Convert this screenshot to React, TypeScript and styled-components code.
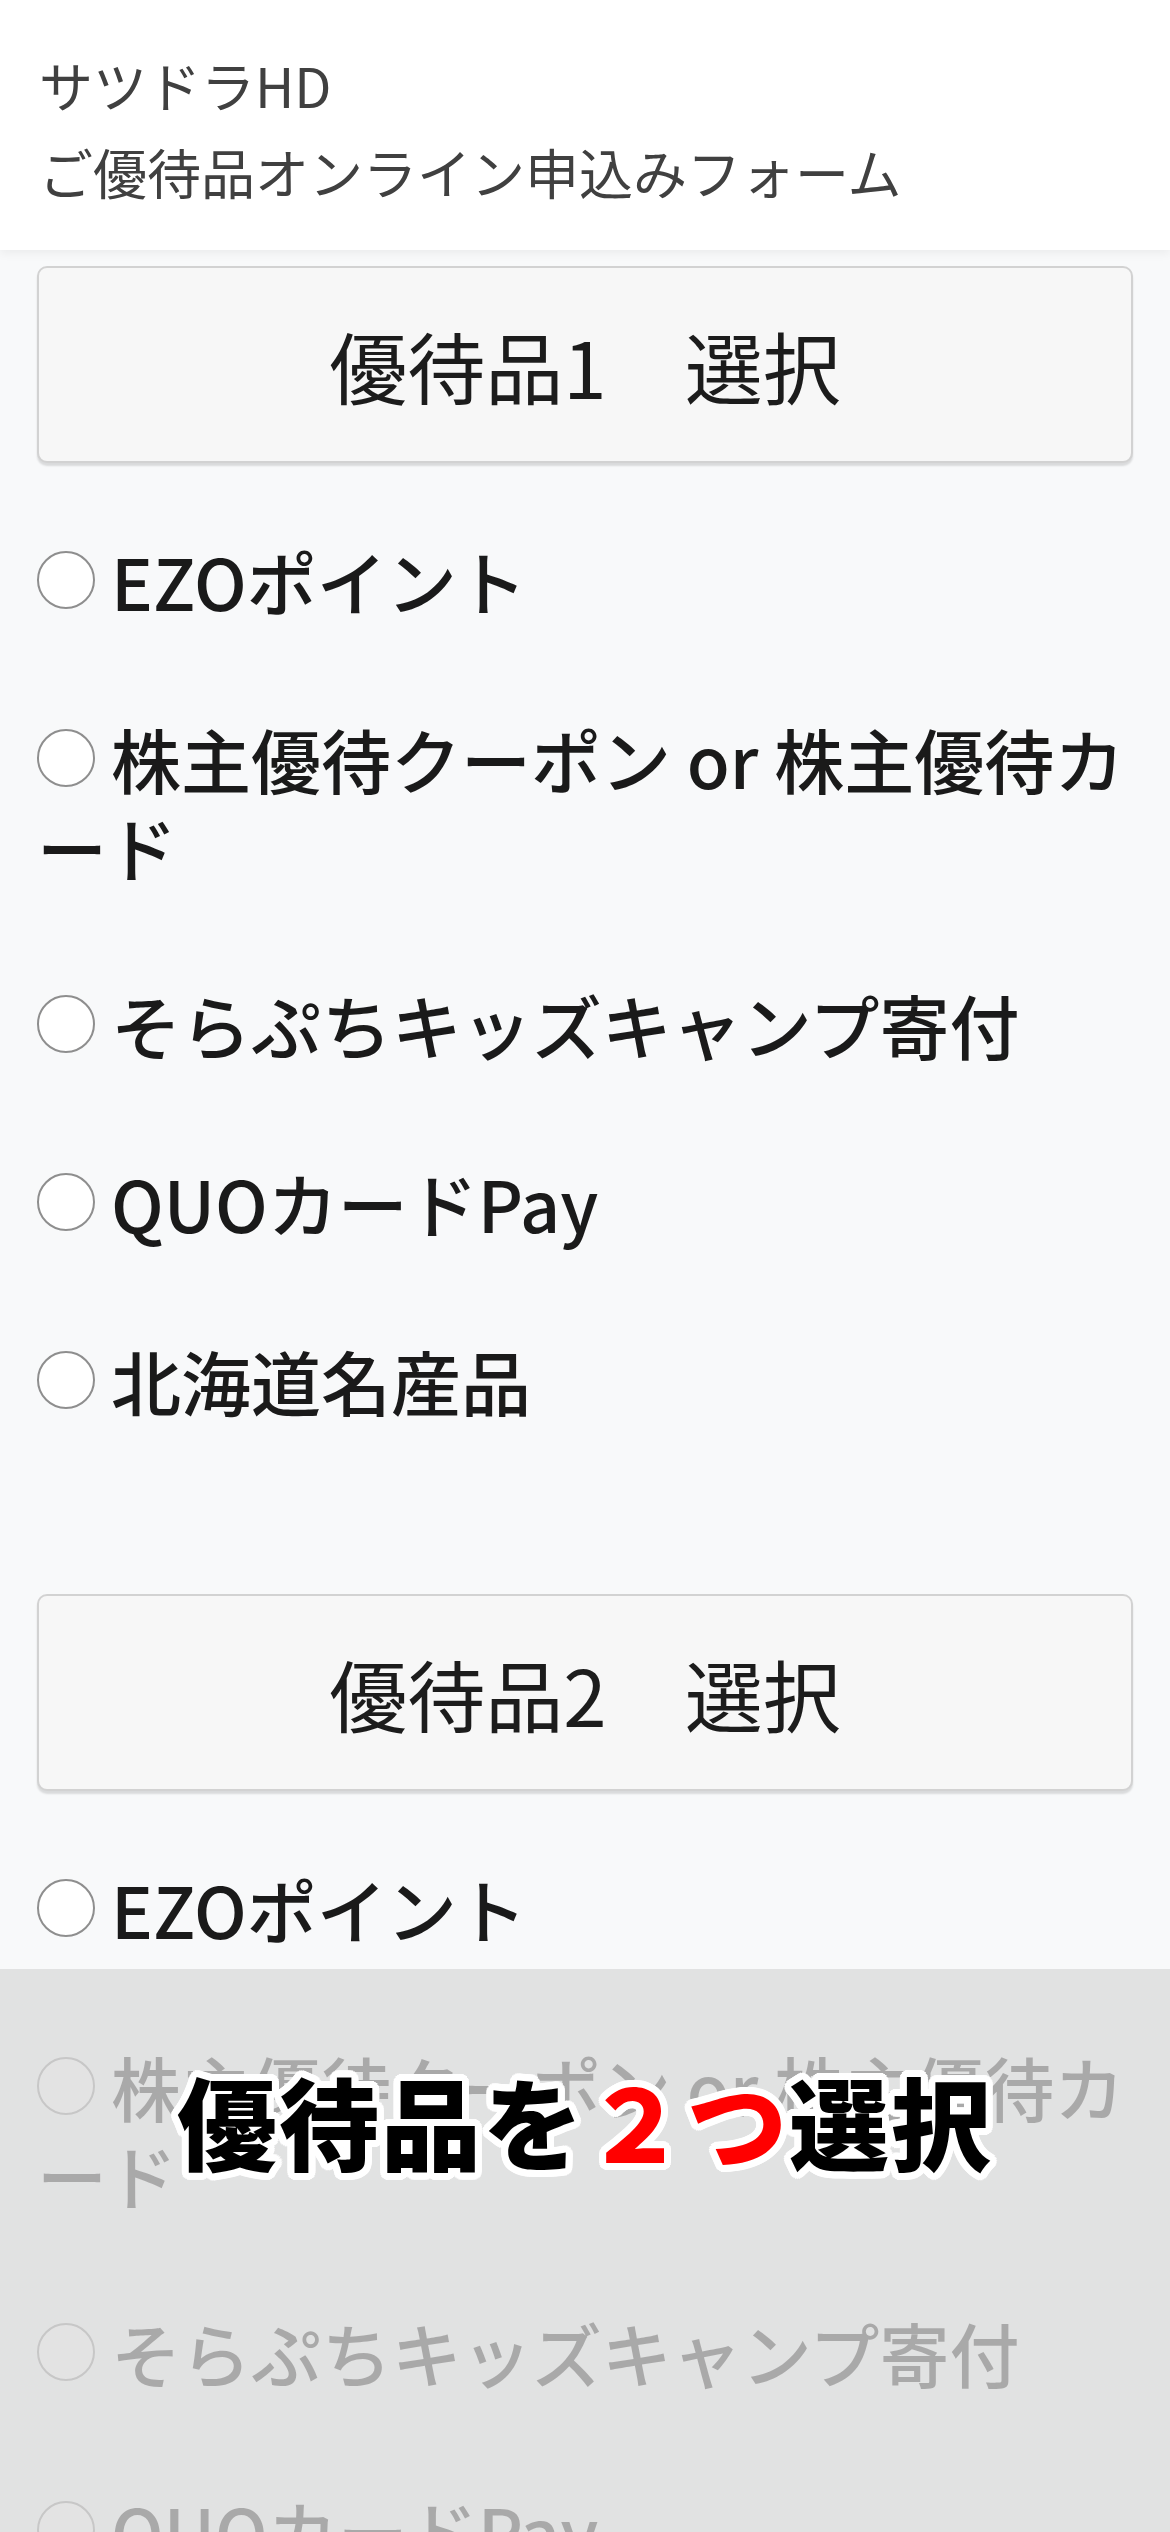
import React from "react";
import styled, { createGlobalStyle } from "styled-components";

const GlobalStyle = createGlobalStyle`
  html, body { margin: 0; padding: 0; }
  body {
    background: #f8f9fa;
    font-family: "Noto Sans CJK JP", "Noto Sans", sans-serif;
    color: #212529;
  }
`;

const Header = styled.header`
  position: relative;
  z-index: 1;
  box-sizing: border-box;
  height: 250px;
  padding: 41px 39px 0;
  background: #ffffff;
  box-shadow: 0 3px 10px rgba(0, 0, 0, 0.06);
`;

const HeaderLine = styled.div`
  font-size: 54px;
  line-height: 87px;
  color: #404040;
  white-space: nowrap;
`;

const Main = styled.main`
  padding: 16px 37px 600px;
`;

const Section = styled.section`
  & + & {
    margin-top: 169px;
  }
`;

const SelectButton = styled.button`
  display: flex;
  align-items: center;
  justify-content: center;
  box-sizing: border-box;
  width: 100%;
  height: 197px;
  padding: 0;
  background: #f7f7f7;
  border: 2px solid #d2d2d2;
  border-radius: 10px;
  box-shadow: 0 3px 2px rgba(0, 0, 0, 0.12);
  font-family: inherit;
  font-size: 78px;
  color: #1c1c1c;
`;

const OptionList = styled.div`
  display: flex;
  flex-direction: column;
  gap: 90px;
  padding-top: 74px;
`;

const OptionLabel = styled.label`
  display: block;
  font-size: 70px;
  font-weight: 500;
  line-height: 88px;
  color: #1a1a1a;
`;

const Radio = styled.input.attrs({ type: "radio" })`
  appearance: none;
  -webkit-appearance: none;
  box-sizing: border-box;
  width: 58px;
  height: 58px;
  margin: 0 16px 0 0;
  border: 2px solid #8e8e8e;
  border-radius: 50%;
  background: #ffffff;
  vertical-align: 2px;
`;

const Overlay = styled.div`
  position: fixed;
  left: 0;
  right: 0;
  bottom: 0;
  z-index: 2;
  box-sizing: border-box;
  height: 563px;
  padding-top: 91px;
  display: flex;
  justify-content: center;
  align-items: flex-start;
  background: rgba(217, 217, 217, 0.75);
`;

const ring = (r: number, n: number) =>
  Array.from({ length: n }, (_, i) => {
    const a = (i / n) * Math.PI * 2;
    return `${(Math.cos(a) * r).toFixed(1)}px ${(Math.sin(a) * r).toFixed(1)}px 0 #fff`;
  }).join(", ");

const Caption = styled.div`
  font-size: 100px;
  font-weight: 900;
  line-height: 120px;
  letter-spacing: 2px;
  color: #000000;
  white-space: nowrap;
  text-shadow: ${ring(7, 24)}, ${ring(4, 16)};
`;

const Accent = styled.span`
  color: #ff0000;
`;

const options = [
  "EZOポイント",
  "株主優待クーポン or 株主優待カード",
  "そらぷちキッズキャンプ寄付",
  "QUOカードPay",
  "北海道名産品",
];

function OptionGroup({ index }: { index: number }) {
  return (
    <Section>
      <SelectButton type="button">優待品{index}　選択</SelectButton>
      <OptionList>
        {options.map((o) => (
          <OptionLabel key={o}>
            <Radio name={`item${index}`} value={o} />
            {o}
          </OptionLabel>
        ))}
      </OptionList>
    </Section>
  );
}

export default function App() {
  return (
    <>
      <GlobalStyle />
      <Header>
        <HeaderLine>サツドラHD</HeaderLine>
        <HeaderLine>ご優待品オンライン申込みフォーム</HeaderLine>
      </Header>
      <Main>
        <OptionGroup index={1} />
        <OptionGroup index={2} />
      </Main>
      <Overlay>
        <Caption>
          優待品を<Accent>２つ</Accent>選択
        </Caption>
      </Overlay>
    </>
  );
}
